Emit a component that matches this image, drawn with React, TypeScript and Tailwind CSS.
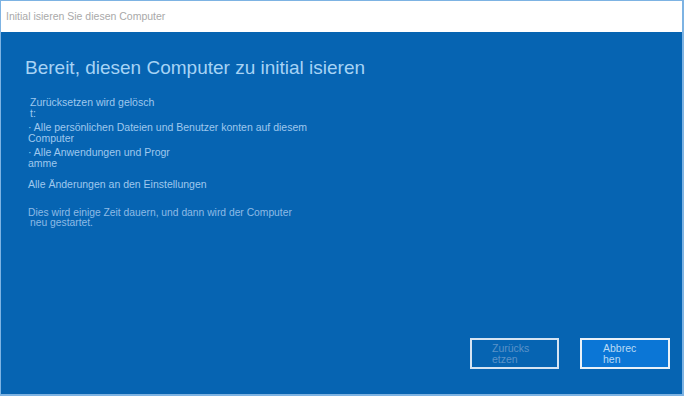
import React from "react";

const font = { fontFamily: '"Liberation Sans", Arial, sans-serif' };

export default function App() {
  return (
    <div
      className="w-[684px] h-[396px] bg-[#7db3e3] pl-px pt-px pr-[2px] pb-[2px]"
      style={font}
    >
      <div className="flex h-full flex-col">
        {/* Title bar */}
        <div className="flex h-[31px] items-center bg-white px-[5px] text-[10.5px] text-[#a9a9a9]">
          Initial isieren Sie diesen Computer
        </div>

        {/* Body */}
        <div className="flex flex-1 flex-col bg-[#0664b2] pl-[24px]">
          <h1 className="mt-[25px] text-[19px] leading-[22px] text-[#a6d3f5]">
            Bereit, diesen Computer zu initial isieren
          </h1>

          <div className="mt-[18px] flex flex-col text-[10.5px] leading-[10.5px] text-[#9fc8ee]">
            <div className="pl-[5px]">
              <div>Zurücksetzen wird gelösch</div>
              <div>t:</div>
            </div>
            <div className="mt-[4px] pl-[3px]">
              <div>· Alle persönlichen Dateien und Benutzer konten auf diesem</div>
              <div>Computer</div>
            </div>
            <div className="mt-[4px] pl-[3px]">
              <div>· Alle Anwendungen und Progr</div>
              <div>amme</div>
            </div>
            <div className="mt-[11px] pl-[3px]">Alle Änderungen an den Einstellungen</div>
            <div className="mt-[18px] pl-[3px] text-[10.3px] text-[#8dbbe6]">
              <div>Dies wird einige Zeit dauern, und dann wird der Computer</div>
              <div className="pl-[2px]">neu gestartet.</div>
            </div>
          </div>

          {/* Buttons */}
          <div className="mt-auto mb-[25px] mr-[12px] flex justify-end gap-[21px]">
            <button className="h-[31px] w-[89px] border-2 border-[#d5e4f3] bg-[#0664b2] pl-[20px] text-left text-[10.5px] leading-[10.5px] text-[#5b93c9]">
              Zurücks
              <br />
              etzen
            </button>
            <button className="h-[31px] w-[90px] border-2 border-[#e9f1f9] bg-[#0b76d6] pl-[21px] text-left text-[10.5px] leading-[10.5px] text-[#b9daf5]">
              Abbrec
              <br />
              hen
            </button>
          </div>
        </div>
      </div>
    </div>
  );
}
